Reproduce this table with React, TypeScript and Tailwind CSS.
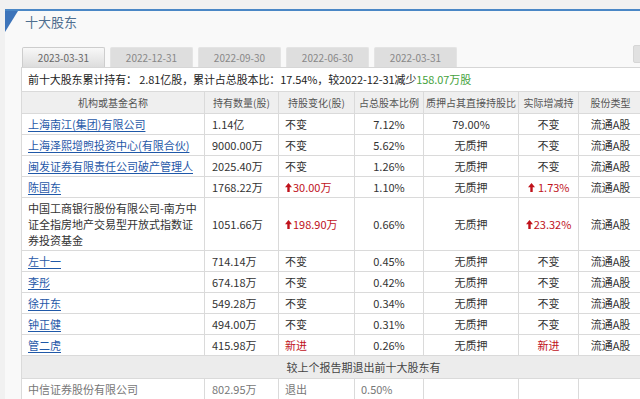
const font = { fontFamily: '"Noto Sans CJK SC", "Noto Sans", sans-serif' }

function UpArrow() {
  return (
    <svg width="7" height="9" viewBox="0 0 7 9" className="inline-block mr-[1px] -mt-[2px] align-middle">
      <path d="M3.5 0 L7 4.2 L4.7 4.2 L4.7 9 L2.3 9 L2.3 4.2 L0 4.2 Z" fill="#c0121b" />
    </svg>
  )
}

type Row = {
  name: string[]
  link: boolean
  qty: string
  change: string
  up?: boolean
  isNew?: boolean
  ratio: string
  pledge: string
  actual: string
  actualUp?: boolean
}

const rows: Row[] = [
  { name: ["上海南江(集团)有限公司"], link: true, qty: "1.14亿", change: "不变", ratio: "7.12%", pledge: "79.00%", actual: "不变" },
  { name: ["上海泽熙增煦投资中心(有限合伙)"], link: true, qty: "9000.00万", change: "不变", ratio: "5.62%", pledge: "无质押", actual: "不变" },
  { name: ["闽发证券有限责任公司破产管理人"], link: true, qty: "2025.40万", change: "不变", ratio: "1.26%", pledge: "无质押", actual: "不变" },
  { name: ["陈国东"], link: true, qty: "1768.22万", change: "30.00万", up: true, ratio: "1.10%", pledge: "无质押", actual: " 1.73%", actualUp: true },
  {
    name: ["中国工商银行股份有限公司-南方中", "证全指房地产交易型开放式指数证", "券投资基金"],
    link: false,
    qty: "1051.66万",
    change: "198.90万",
    up: true,
    ratio: "0.66%",
    pledge: "无质押",
    actual: "23.32%",
    actualUp: true,
  },
  { name: ["左十一"], link: true, qty: "714.14万", change: "不变", ratio: "0.45%", pledge: "无质押", actual: "不变" },
  { name: ["李彤"], link: true, qty: "674.18万", change: "不变", ratio: "0.42%", pledge: "无质押", actual: "不变" },
  { name: ["徐开东"], link: true, qty: "549.28万", change: "不变", ratio: "0.34%", pledge: "无质押", actual: "不变" },
  { name: ["钟正健"], link: true, qty: "494.00万", change: "不变", ratio: "0.31%", pledge: "无质押", actual: "不变" },
  { name: ["管二虎"], link: true, qty: "415.98万", change: "新进", isNew: true, ratio: "0.26%", pledge: "无质押", actual: "新进" },
]

const tabs = ["2023-03-31", "2022-12-31", "2022-09-30", "2022-06-30", "2022-03-31"]
const headers = ["机构或基金名称", "持有数量(股)", "持股变化(股)", "占总股本比例", "质押占其直接持股比", "实际增减持", "股份类型", ""]

const cell = "border border-[#dadada] align-middle"

export default function App() {
  return (
    <div className="w-[640px] h-[399px] overflow-hidden bg-[#f1f1f1] pt-[9px] pl-[5px]" style={font}>
      <div className="relative h-full bg-[#f9f9f9] border-t-2 border-[#4a87c6]">
        <svg width="13" height="21" viewBox="0 0 13 21" className="absolute left-0 top-0">
          <path d="M0 0 L13 0 L0 21 Z" fill="#3d74ba" />
        </svg>
        <div className="h-[22px] pl-[20px] flex items-center text-[13px] text-[#4f6f90]">十大股东</div>

        <div className="mt-[14px] flex items-end pl-[17px] gap-[5px] h-[20px] relative">
          {tabs.map((t, i) => (
            <div
              key={t}
              className={
                i === 0
                  ? "w-[83px] h-[20px] rounded-t-[2px] border border-b-0 border-[#cdcdcd] bg-gradient-to-b from-[#f8f8f8] to-[#dddddd] flex items-center justify-center text-[10px] text-[#666]"
                  : "w-[83px] h-[20px] rounded-t-[2px] border border-b-0 border-[#e4e4e4] bg-[#dedede] flex items-center justify-center text-[10px] text-[#888]"
              }
            >
              {t}
            </div>
          ))}
          <div className="absolute left-[628px] top-[-2px] w-[20px] h-[18px] rounded-[2px] bg-[#e1e1e1] border border-[#d6d6d6]" />
        </div>

        <div className="ml-[16px] bg-white border-t border-l border-[#d6d6d6]">
          <div className="h-[23px] pl-[6px] flex items-center text-[11px] text-[#222] whitespace-nowrap tracking-[-0.1px]">
            前十大股东累计持有： 2.81亿股，累计占总股本比：17.54%，较2022-12-31减少
            <span className="text-[#46a23c]">158.07万股</span>
          </div>
          <table className="table-fixed border-collapse w-[684px] -ml-[1px] text-[11px] text-[#333] bg-white">
            <colgroup>
              <col className="w-[183px]" />
              <col className="w-[74px]" />
              <col className="w-[76px]" />
              <col className="w-[69px]" />
              <col className="w-[95px]" />
              <col className="w-[60px]" />
              <col className="w-[64px]" />
              <col className="w-[63px]" />
            </colgroup>
            <thead>
              <tr className="h-[22px] bg-[#efefef]">
                {headers.map((h, i) => (
                  <th key={i} className={`${cell} font-normal text-[10px] text-[#555] text-center`}>
                    {h}
                  </th>
                ))}
              </tr>
            </thead>
            <tbody>
              {rows.map((r, i) => (
                <tr key={i} className={r.name.length > 1 ? "h-[53px]" : "h-[21px]"}>
                  <td className={`${cell} pl-[6px] leading-[16px]`}>
                    {r.link ? (
                      <a href="#" className="text-[#1f58a8] underline underline-offset-2">
                        {r.name[0]}
                      </a>
                    ) : (
                      r.name.map((n) => <div key={n}>{n}</div>)
                    )}
                  </td>
                  <td className={`${cell} pl-[7px]`}>{r.qty}</td>
                  <td className={`${cell} pl-[6px] ${r.up || r.isNew ? "text-[#c0121b]" : ""}`}>
                    {r.up && <UpArrow />}
                    {r.change}
                  </td>
                  <td className={`${cell} text-center`}>{r.ratio}</td>
                  <td className={`${cell} text-center`}>{r.pledge}</td>
                  <td className={`${cell} text-center whitespace-pre ${r.actualUp || r.isNew ? "text-[#c0121b]" : ""}`}>
                    {r.actualUp && <UpArrow />}
                    {r.actual}
                  </td>
                  <td className={`${cell} text-center`}>流通A股</td>
                  <td className={cell}></td>
                </tr>
              ))}
              <tr className="h-[23px] bg-[#ececec]">
                <td colSpan={8} className={`${cell} text-center text-[#444]`}>
                  较上个报告期退出前十大股东有
                </td>
              </tr>
              <tr className="h-[21px] text-[#777]">
                <td className={`${cell} pl-[6px]`}>中信证券股份有限公司</td>
                <td className={`${cell} pl-[7px]`}>802.95万</td>
                <td className={`${cell} pl-[6px]`}>退出</td>
                <td className={`${cell} pl-[6px]`}>0.50%</td>
                <td className={cell}></td>
                <td className={cell}></td>
                <td className={cell}></td>
                <td className={cell}></td>
              </tr>
            </tbody>
          </table>
        </div>
      </div>
    </div>
  )
}
